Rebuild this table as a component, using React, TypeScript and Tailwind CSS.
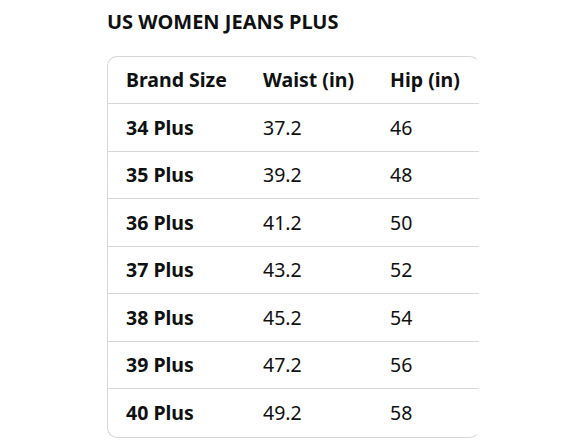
import React from "react";

const rows = [
  ["34 Plus", "37.2", "46"],
  ["35 Plus", "39.2", "48"],
  ["36 Plus", "41.2", "50"],
  ["37 Plus", "43.2", "52"],
  ["38 Plus", "45.2", "54"],
  ["39 Plus", "47.2", "56"],
  ["40 Plus", "49.2", "58"],
];

export default function App() {
  return (
    <div
      className="w-[588px] h-[441px] bg-white text-[#0f1111] pl-[107px] pt-[10px]"
      style={{ fontFamily: '"Noto Sans", Roboto, sans-serif' }}
    >
      <div className="text-[20px] font-bold leading-[24px] h-[46px]">US WOMEN JEANS PLUS</div>
      <div className="w-[373px] border border-[#d5d9d9] border-r-transparent rounded-[10px]">
        <div className="flex h-[47px] items-center border-b border-[#d5d9d9] text-[19.5px] font-bold">
          <div className="w-[155px] pl-[18px]">Brand Size</div>
          <div className="w-[127px]">Waist (in)</div>
          <div>Hip (in)</div>
        </div>
        {rows.map((r, i) => (
          <div
            key={r[0]}
            className={
              "flex h-[47.5px] items-center text-[19.5px] " +
              (i < rows.length - 1 ? "border-b border-[#d5d9d9]" : "")
            }
          >
            <div className="w-[155px] pl-[18px] font-bold">{r[0]}</div>
            <div className="w-[127px]">{r[1]}</div>
            <div>{r[2]}</div>
          </div>
        ))}
      </div>
    </div>
  );
}
